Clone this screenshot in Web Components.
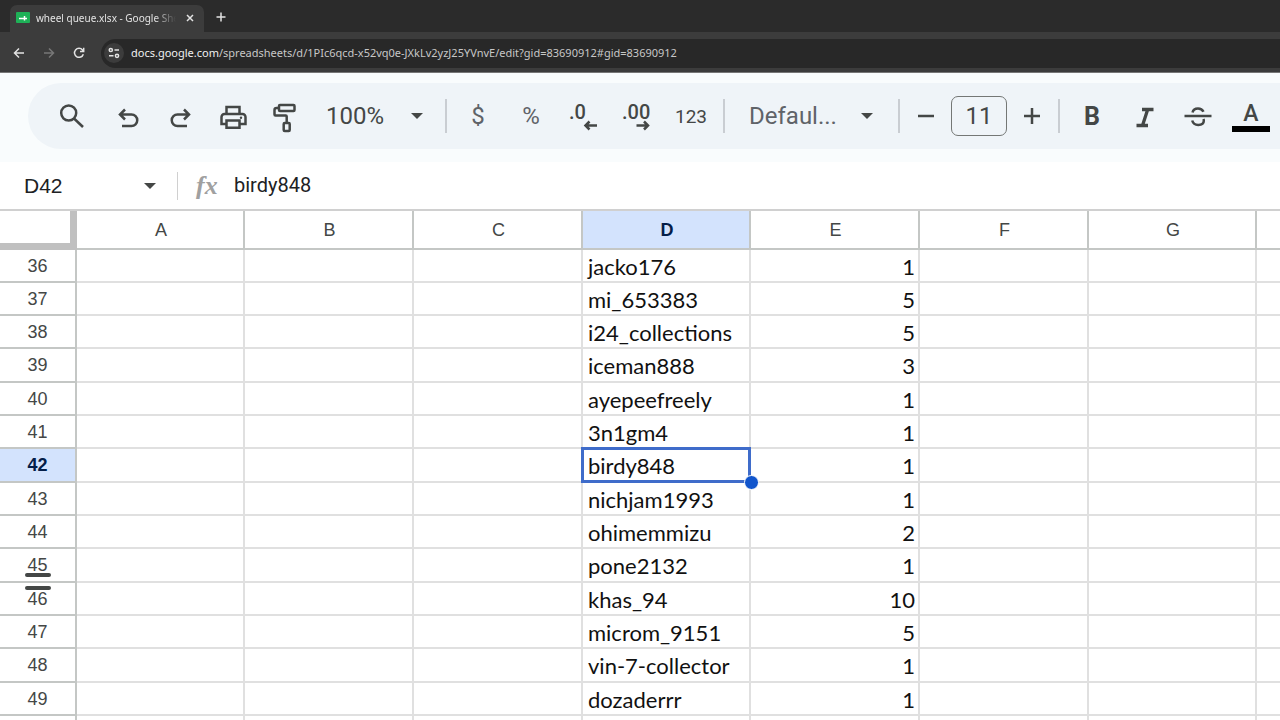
<!DOCTYPE html>
<html lang="en">
<head>
    <meta charset="UTF-8">
    <meta name="viewport" content="width=device-width, initial-scale=1.0">
    <title>wheel queue.xlsx - Google Sheets</title>
    <style>
        body { margin: 0; height: 100vh; overflow: hidden; background: #fff; font-family: Roboto, "Liberation Sans", sans-serif; }
    </style>
</head>
<body>
    <!-- browser frame: tab strip and address bar -->
    <template id="tpl-browser-bar">
        <style>
        :host { display: block; background: #3c3c3c; border-bottom: 1px solid #777; color: #e3e3e3; font-family: "Noto Sans", "Open Sans", sans-serif; }
        button { background: none; border: none; padding: 0; color: inherit; display: flex; align-items: center; justify-content: center; }
        svg { display: block; fill: none; stroke: currentColor; stroke-width: 1.5; }
        .strip { display: flex; align-items: flex-end; height: 32px; padding-left: 10px; background: #2b2b2b; }
        .tab { display: flex; align-items: center; box-sizing: border-box; width: 194px; height: 27px; padding: 0 6px 2px; gap: 6px; background: #3c3c3c; border-radius: 7px 7px 0 0; }
        .title { flex: 1; overflow: hidden; white-space: nowrap; font-size: 10px; line-height: 16px; -webkit-mask-image: linear-gradient(to right, #000 85%, transparent); mask-image: linear-gradient(to right, #000 85%, transparent); }
        .tab button { width: 16px; height: 16px; }
        .new { width: 34px; height: 30px; }
        .nav { display: flex; align-items: center; height: 38px; padding: 2px 0 0 4px; }
        .nav > button { width: 30px; height: 30px; }
        .off { color: #777; }
        .address { display: flex; align-items: center; flex: 1; height: 29px; margin-left: 7px; padding-left: 3px; gap: 7px; background: #282828; border-radius: 15px 0 0 15px; }
        .address button { width: 20px; height: 20px; border-radius: 10px; background: #3c3c3c; }
        .url { font-size: 11px; line-height: 18px; color: #c7c7c7; white-space: nowrap; text-decoration: none; }
        </style>
        <div class="strip">
            <div class="tab">
                <svg width="14" height="12" viewBox="0 0 14 12"><rect width="14" height="11" rx="1" fill="#1eb157" stroke="none"/><path d="M3 6.500h8M8.500 4v4.500" stroke="#fff"/></svg>
                <span class="title"><slot name="title"></slot></span>
                <button aria-label="Close tab"><svg width="10" height="10" viewBox="0 0 10 10"><path d="M2 2l6 6M8 2L2 8"/></svg></button>
            </div>
            <button class="new" aria-label="New tab"><svg width="10" height="10" viewBox="0 0 10 10"><path d="M5 .5v9M.5 5h9"/></svg></button>
        </div>
        <div class="nav">
            <button aria-label="Back"><svg width="12" height="12" viewBox="0 0 12 12"><path d="M11 6H1.500M6 1.500L1.500 6 6 10.500"/></svg></button>
            <button class="off" aria-label="Forward"><svg width="12" height="12" viewBox="0 0 12 12"><path d="M1 6h9.500M6 1.500L10.500 6 6 10.500"/></svg></button>
            <button aria-label="Reload"><svg width="12" height="12" viewBox="0 0 12 12"><path d="M10.300 7.200A4.500 4.500 0 1 1 9.500 3L10.500 4.200M10.700 .8v3.700H7"/></svg></button>
            <div class="address">
                <button aria-label="Site information"><svg width="12" height="12" viewBox="0 0 12 12"><circle cx="2.800" cy="3" r="1.600"/><path d="M6.500 3H11M1 8.800h4.500"/><circle cx="9" cy="8.800" r="1.600"/></svg></button>
                <a class="url" href="#"><slot name="url"></slot></a>
            </div>
        </div>
    </template>

    <!-- thin divider used between tool groups -->
    <template id="tpl-tool-divider">
        <style>:host { display: block; flex: none; width: 2px; height: 34px; margin: 0 5px; background: #c9cdd2; }</style>
    </template>

    <!-- one toolbar button, icon or text goes in the slot -->
    <template id="tpl-tool-button">
        <style>
        :host { display: block; flex: none; width: 52px; height: 48px; }
        button { display: flex; align-items: center; justify-content: center; width: 100%; height: 100%; padding: 0; border: none; background: none; color: inherit; font: inherit; }
        </style>
        <button><slot></slot></button>
    </template>

    <template id="tpl-sheet-toolbar">
        <style>
        :host { display: block; padding: 10px 0 13px 28px; background: #f9fcfd; }
        .bar { display: flex; align-items: center; height: 66px; padding-left: 14px; overflow: hidden; background: #eff4f8; border-radius: 33px 0 0 33px; color: #444746; }
        .search { width: 60px; }
        .group { display: flex; align-items: center; flex: none; }
        .format { gap: 1px; font-size: 24px; }
        .format tool-button { color: #5f6368; }
        .format .number { width: 54px; font-size: 19px; color: #444746; }
        .step { gap: 4px; }
        .step tool-button { width: 42px; }
        .step input { box-sizing: border-box; width: 56px; height: 40px; padding: 0; border: 1px solid #747775; border-radius: 7px; background: none; color: #444746; font: 24px Roboto, sans-serif; text-align: center; }
        .style tool-button { width: 53px; }
        svg { display: block; fill: none; stroke: #444746; stroke-width: 2.5; }
        svg text { fill: #444746; stroke: none; font-family: Roboto, sans-serif; font-weight: 500; }
        .pick { display: flex; align-items: center; flex: none; box-sizing: border-box; }
        .pick svg { fill: #444746; stroke: none; pointer-events: none; }
        .pick select { flex: 1; min-width: 0; padding: 0; border: none; appearance: none; background: none; color: #444746; font: 24px Roboto, sans-serif; }
        .zoom { width: 130px; padding: 0 16px; }
        .font { width: 163px; padding: 0 19px; }
        .font select { color: #5f6368; }
        </style>
        <div class="bar">
            <tool-button class="search"><svg width="32" height="32" viewBox="0 0 32 32"><circle cx="12.700" cy="13" r="7.500"/><path d="M18 18.500l9 8.500"/></svg></tool-button>
            <div class="group">
                <tool-button><svg width="32" height="32" viewBox="0 0 32 32"><path d="M13 9.500l-5 5 5 5M8 14.500h11.500a5.700 5.700 0 0 1 0 11.500H10"/></svg></tool-button>
                <tool-button><svg width="32" height="32" viewBox="0 0 32 32"><path d="M20 9.500l5 5-5 5M25 14.500H13.500a5.700 5.700 0 0 0 0 11.500H23"/></svg></tool-button>
                <tool-button><svg width="32" height="32" viewBox="0 0 32 32"><path d="M10.500 13V7h13v6M10.500 24H5.500v-7a3 3 0 0 1 3-3h18a3 3 0 0 1 3 3v7h-5M10.500 20.500h13v7.200h-13z"/><circle cx="25" cy="17.800" r="1.200" fill="#444746" stroke="none"/></svg></tool-button>
                <tool-button><svg width="32" height="34" viewBox="0 0 32 34"><rect x="11" y="6" width="15.500" height="6" rx="1"/><path d="M11 9H8.500a2 2 0 0 0-2 2v4.500a1 1 0 0 0 1 1h10.200a1 1 0 0 1 1 1V24"/><rect x="15.700" y="24" width="6" height="8" rx="1"/></svg></tool-button>
            </div>
            <label class="pick zoom">
                <select aria-label="Zoom"><option>100%</option></select>
                <svg width="14" height="8" viewBox="0 0 14 8"><path d="M1 1h12L7 7z"/></svg>
            </label>
            <tool-divider></tool-divider>
            <div class="group format">
                <tool-button>$</tool-button>
                <tool-button>%</tool-button>
                <tool-button><svg width="32" height="32" viewBox="0 0 32 32"><text x="1" y="19" font-size="20">.0</text><path d="M29 25.500H17.500M21.500 21.500l-4 4 4 4"/></svg></tool-button>
                <tool-button><svg width="32" height="32" viewBox="0 0 32 32"><text x="1" y="19" font-size="20">.00</text><path d="M15.500 25.500H27M23 21.500l4 4-4 4"/></svg></tool-button>
                <tool-button class="number">123</tool-button>
            </div>
            <tool-divider></tool-divider>
            <label class="pick font">
                <select aria-label="Font"><option>Defaul...</option></select>
                <svg width="14" height="8" viewBox="0 0 14 8"><path d="M1 1h12L7 7z"/></svg>
            </label>
            <tool-divider></tool-divider>
            <div class="group step">
                <tool-button><svg width="18" height="18" viewBox="0 0 18 18"><path d="M1 9h16"/></svg></tool-button>
                <input aria-label="Font size" value="11">
                <tool-button><svg width="18" height="18" viewBox="0 0 18 18"><path d="M1 9h16M9 1v16"/></svg></tool-button>
            </div>
            <tool-divider></tool-divider>
            <div class="group style">
                <tool-button><svg width="32" height="32" viewBox="0 0 32 32"><text x="8" y="25" font-size="25" style="font-weight:700">B</text></svg></tool-button>
                <tool-button><svg width="32" height="32" viewBox="0 0 32 32"><path d="M13 9.500h11.500M7.500 25.500H19M18.700 9.500L13.500 25.500" style="stroke-width:3.3"/></svg></tool-button>
                <tool-button><svg width="32" height="32" viewBox="0 0 32 32"><path d="M2.500 16h27"/><path d="M10.500 12.500c.6-2.600 2.700-4 5.500-4 2.600 0 4.500 1.200 5.500 3.200M10.200 20.500c.8 2.900 3 4.500 6 4.500 3.500 0 5.600-1.800 5.600-4.200 0-.7-.1-1.200-.4-1.800"/></svg></tool-button>
                <tool-button><svg width="38" height="32" viewBox="0 0 38 32"><text x="19" y="21" font-size="23" text-anchor="middle">A</text><path d="M0 26h38v6H0z" fill="#000" stroke="none"/></svg></tool-button>
            </div>
        </div>
    </template>

    <template id="tpl-formula-bar">
        <style>
        :host { display: flex; align-items: center; height: 47px; background: #fff; }
        input { box-sizing: border-box; min-width: 0; padding: 0; border: none; background: none; color: #202124; font: 20px Roboto, sans-serif; }
        .name { display: flex; align-items: center; width: 133px; padding: 0 20px 0 24px; }
        .name input { flex: 1; font: 21px "Liberation Sans", sans-serif; }
        .line { width: 1px; height: 28px; background: #d0d0d0; }
        .formula { display: flex; align-items: center; flex: 1; gap: 13px; padding-left: 18px; }
        .formula input { flex: 1; height: 32px; padding-bottom: 2px; }
        .fx { width: 25px; font: italic 700 26px/30px "Liberation Serif", serif; color: #a0a0a0; }
        </style>
        <label class="name">
            <input aria-label="Name box">
            <svg width="14" height="8" viewBox="0 0 14 8"><path d="M1 1h12L7 7z" fill="#444746"/></svg>
        </label>
        <span class="line"></span>
        <label class="formula"><span class="fx">fx</span><input aria-label="Formula"></label>
    </template>

    <template id="tpl-sheet-grid">
        <style>
        :host { display: block; border-top: 2px solid #d0d0d0; font-family: "Liberation Sans", Arial, sans-serif; }
        table { width: 100%; table-layout: fixed; border-collapse: separate; border-spacing: 0; }
        th, td { position: relative; box-sizing: border-box; height: 33px; padding: 0; border: solid #e0e0e0; border-width: 0 2px 2px 0; white-space: nowrap; }
        tbody tr:nth-child(3n+4) > * { height: 34px; }
        th { font-size: 18px; line-height: 20px; font-weight: 400; color: #444746; border-color: #c4c7c5; }
        thead th { height: 39px; padding-left: 2px; }
        th.on { background: #d3e3fd; color: #041e49; font-weight: 700; }
        td { padding: 1px 3px 0 5px; font: 22px/29px Lato, sans-serif; color: #111; }
        td.num { text-align: right; }
        tr > :last-child { border-right: none; }
        .corner { border: solid #c0c0c0; border-width: 0 7px 7px 0; }
        .row { width: 77px; }
        .col { width: 169px; }
        .slim { width: 168px; }
        .select::before { content: ""; position: absolute; inset: -2px; border: 3px solid #3f6cca; }
        .select::after { content: ""; position: absolute; right: -10px; bottom: -9px; width: 13px; height: 13px; border: 1px solid #fff; border-radius: 8px; background: #1155cc; z-index: 1; }
        /* handle for dragging the frozen rows, one bar on each side of the line */
        .grip::before, .grip::after { content: ""; position: absolute; left: 25px; width: 26px; height: 4px; border-radius: 2px; background: #444746; z-index: 1; }
        .grip::before { bottom: 4px; }
        .grip::after { bottom: -9px; }
        </style>
        <table>
            <colgroup><col class="row"><col class="slim"><col class="col"><col class="col"><col class="slim"><col class="col"><col class="col"><col class="slim"><col></colgroup>
            <thead><tr></tr></thead>
            <tbody></tbody>
        </table>
    </template>

    <script>
        // clone a template into an open shadow root
        function attach(el, id) {
            const shadow = el.attachShadow({ mode: 'open' });
            shadow.appendChild(document.getElementById(id).content.cloneNode(true));
            return shadow;
        }

        class BrowserBar extends HTMLElement {
            constructor() { super(); attach(this, 'tpl-browser-bar'); }
        }
        class ToolDivider extends HTMLElement {
            constructor() { super(); attach(this, 'tpl-tool-divider'); }
        }
        class ToolButton extends HTMLElement {
            constructor() { super(); attach(this, 'tpl-tool-button'); }
        }
        class SheetToolbar extends HTMLElement {
            constructor() { super(); attach(this, 'tpl-sheet-toolbar'); }
        }

        class FormulaBar extends HTMLElement {
            constructor() { super(); attach(this, 'tpl-formula-bar'); }
            connectedCallback() {
                const [name, formula] = this.shadowRoot.querySelectorAll('input');
                name.value = this.getAttribute('cell');
                formula.value = this.getAttribute('value');
            }
        }

        const ROWS = [
            [36, 'jacko176', 1], [37, 'mi_653383', 5], [38, 'i24_collections', 5],
            [39, 'iceman888', 3], [40, 'ayepeefreely', 1], [41, '3n1gm4', 1],
            [42, 'birdy848', 1], [43, 'nichjam1993', 1], [44, 'ohimemmizu', 2],
            [45, 'pone2132', 1], [46, 'khas_94', 10], [47, 'microm_9151', 5],
            [48, 'vin-7-collector', 1], [49, 'dozaderrr', 1], ['', '', '']
        ];

        class SheetGrid extends HTMLElement {
            constructor() {
                super();
                const shadow = attach(this, 'tpl-sheet-grid');
                const cols = ['A', 'B', 'C', 'D', 'E', 'F', 'G', ''];
                shadow.querySelector('thead tr').innerHTML = '<th class="corner"></th>' +
                    cols.map(c => `<th scope="col" class="${c === 'D' ? 'on' : ''}">${c}</th>`).join('');
                shadow.querySelector('tbody').innerHTML = ROWS.map(([n, user, count]) => {
                    const head = n === 42 ? 'on' : n === 45 ? 'grip' : '';
                    const cells = cols.map(c => {
                        if (c === 'D') return `<td class="${n === 42 ? 'select' : ''}">${user}</td>`;
                        if (c === 'E') return `<td class="num">${count}</td>`;
                        return '<td></td>';
                    }).join('');
                    return `<tr><th scope="row" class="${head}">${n}</th>${cells}</tr>`;
                }).join('');
            }
        }

        customElements.define('browser-bar', BrowserBar);
        customElements.define('tool-divider', ToolDivider);
        customElements.define('tool-button', ToolButton);
        customElements.define('sheet-toolbar', SheetToolbar);
        customElements.define('formula-bar', FormulaBar);
        customElements.define('sheet-grid', SheetGrid);
    </script>

    <browser-bar>
        <span slot="title">wheel queue.xlsx - Google Sheets</span>
        <span slot="url"><span style="color:#f0f0f0">docs.google.com</span>/spreadsheets/d/1PIc6qcd-x52vq0e-JXkLv2yzJ25YVnvE/edit?gid=83690912#gid=83690912</span>
    </browser-bar>
    <sheet-toolbar></sheet-toolbar>
    <formula-bar cell="D42" value="birdy848"></formula-bar>
    <sheet-grid></sheet-grid>
</body>
</html>
